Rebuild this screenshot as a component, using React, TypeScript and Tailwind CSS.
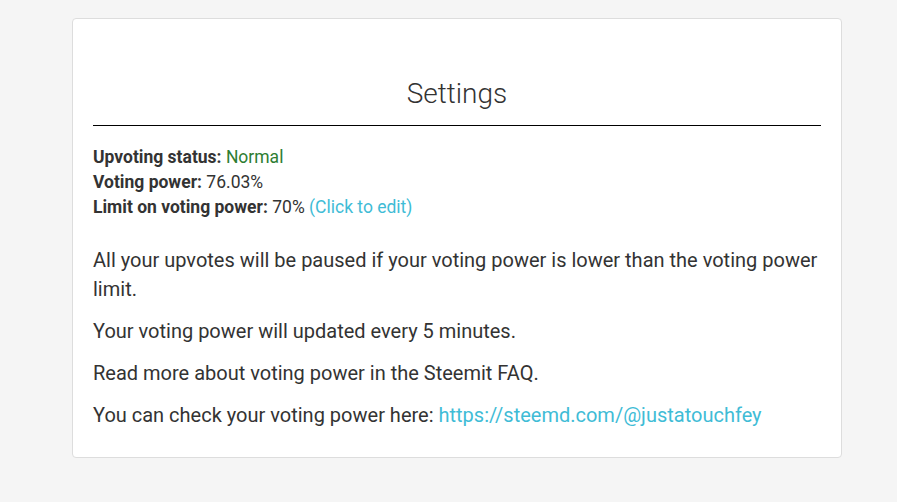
export default function App() {
  return (
    <div className="min-h-screen bg-[#f5f5f5] pt-[18px] pb-[45px] font-['Roboto',sans-serif] text-[#333]">
      <div className="ml-[72px] w-[770px] rounded-[4px] border border-[#dddddd] bg-white px-5 pt-[55px] pb-[27px]">
        {/* Header */}
        <h1 className="text-center text-[28px] font-light leading-[40px] text-[#333] pb-[11px] border-b border-black">
          Settings
        </h1>

        {/* Status */}
        <div className="mt-[19px] text-[17.5px] leading-[25px]">
          <div>
            <b className="font-bold">Upvoting status:</b>{' '}
            <span className="text-[#2e7d32]">Normal</span>
          </div>
          <div>
            <b className="font-bold">Voting power:</b> 76.03%
          </div>
          <div>
            <b className="font-bold">Limit on voting power:</b> 70%{' '}
            <a className="cursor-pointer text-[#3fbcd6]">(Click to edit)</a>
          </div>
        </div>

        {/* Info */}
        <div className="mt-[26px] space-y-[13px] text-[20px] leading-[29px]">
          <p>All your upvotes will be paused if your voting power is lower than the voting power limit.</p>
          <p>Your voting power will updated every 5 minutes.</p>
          <p>Read more about voting power in the Steemit FAQ.</p>
          <p>
            You can check your voting power here:{' '}
            <a className="text-[#3fbcd6]" href="#">https://steemd.com/@justatouchfey</a>
          </p>
        </div>
      </div>
    </div>
  )
}
